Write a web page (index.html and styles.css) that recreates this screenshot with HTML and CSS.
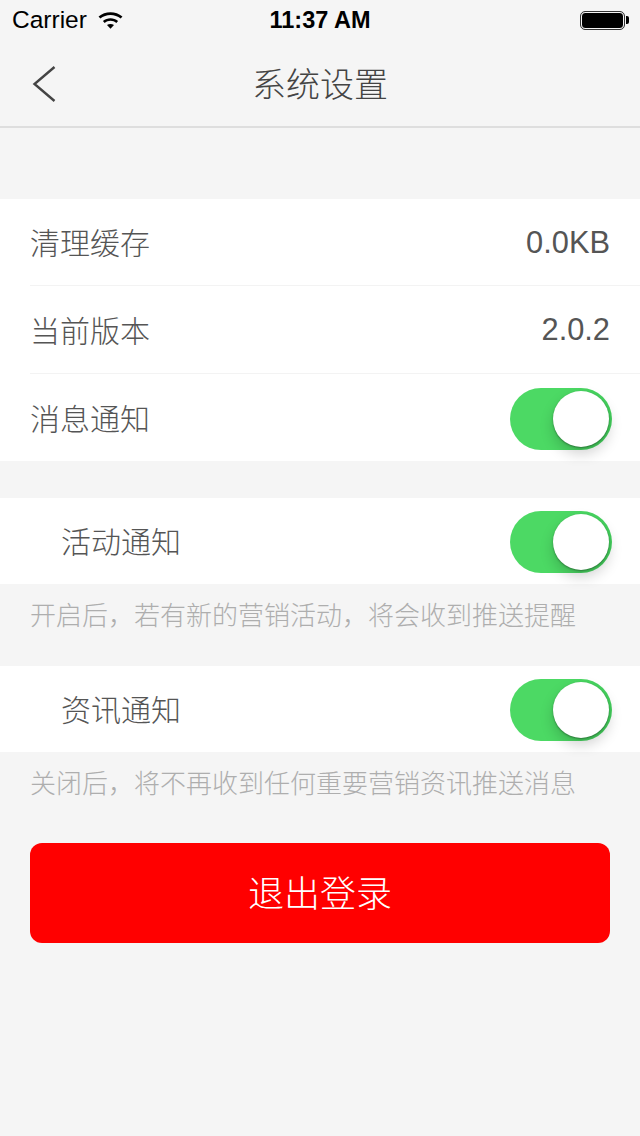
FILE: index.html
```html
<!DOCTYPE html>
<html lang="zh-CN">
<head>
  <meta charset="UTF-8" />
  <title>系统设置</title>
  <link rel="stylesheet" href="styles.css">
</head>
<body>
  <!-- status bar -->
  <div class="status-bar">
    <div class="status-left">
      <span>Carrier</span>
      <svg class="wifi" width="27" height="19" viewBox="0 0 26 18">
        <path d="M1.5 6.2C7.8.6 18.2.6 24.5 6.2l-1.7 1.9C17.4 3.4 8.6 3.4 3.2 8.1z" fill="#000"/>
        <path d="M5.7 10.4c4.3-3.6 10.3-3.6 14.6 0l-1.7 1.9c-3.3-2.7-7.9-2.7-11.2 0z" fill="#000"/>
        <path d="M9.6 14.2c2-1.3 4.8-1.3 6.8 0L13 17.8z" fill="#000"/>
      </svg>
    </div>
    <div class="status-time">11:37 AM</div>
    <div class="battery">
      <div class="battery-body"></div>
      <div class="battery-tip"></div>
    </div>
  </div>

  <!-- nav -->
  <div class="nav-bar">
    <svg class="back" width="28" height="38" viewBox="0 0 28 38">
      <path d="M24.5 2L4.5 19l20 17" fill="none" stroke="#444" stroke-width="2.4"/>
    </svg>
    <h1 class="nav-title">系统设置</h1>
  </div>

  <div class="group first-group">
    <div class="row row-line row-top">
      <span class="label">清理缓存</span>
      <span class="value">0.0KB</span>
    </div>
    <div class="row row-line">
      <span class="label">当前版本</span>
      <span class="value">2.0.2</span>
    </div>
    <div class="row switch-row">
      <span class="label">消息通知</span>
      <div class="switch"><div class="knob"></div></div>
    </div>
  </div>

  <div class="group sub-group">
    <div class="row switch-row sub-row">
      <span class="label">活动通知</span>
      <div class="switch"><div class="knob"></div></div>
    </div>
  </div>
  <p class="note">开启后，若有新的营销活动，将会收到推送提醒</p>

  <div class="group">
    <div class="row switch-row sub-row">
      <span class="label">资讯通知</span>
      <div class="switch"><div class="knob"></div></div>
    </div>
  </div>
  <p class="note note-last">关闭后，将不再收到任何重要营销资讯推送消息</p>

  <button class="logout">退出登录</button>
</body>
</html>
```

FILE: styles.css
```css
html, body {
  margin: 0;
  padding: 0;
  background: #f5f5f5;
  overflow: hidden;
  font-family: "Liberation Sans", "Noto Sans CJK SC", sans-serif;
  box-sizing: border-box;
}
*, *::before, *::after {
  box-sizing: inherit;
}

/* status bar */
.status-bar {
  height: 40px;
  padding: 0 12px;
  display: grid;
  grid-template-columns: 1fr auto 1fr;
  align-items: center;
  color: #000;
}
.status-left {
  display: flex;
  align-items: center;
  gap: 10px;
  font-size: 24.5px;
}
.wifi {
  margin-top: -2px;
}
.status-time {
  font-size: 23.5px;
  font-weight: 700;
}
.battery {
  justify-self: end;
  display: flex;
  align-items: center;
  margin-right: -1px;
}
.battery-body {
  width: 43px;
  height: 17px;
  background: #000;
  border: 1px solid #f5f5f5;
  outline: 1px solid #333;
  outline-offset: 0;
  border-radius: 4px;
}
.battery-tip {
  width: 3px;
  height: 8px;
  margin-left: 2px;
  background: #000;
  border-radius: 0 2px 2px 0;
}

/* nav */
.nav-bar {
  height: 88px;
  padding: 0 30px;
  display: flex;
  align-items: center;
  justify-content: center;
  position: relative;
  border-bottom: 2px solid #dedede;
}
.back {
  position: absolute;
  left: 30px;
  top: 25px;
}
.nav-title {
  margin: 0;
  margin-top: -2px;
  font-size: 34px;
  font-weight: 300;
  color: #444;
}

/* groups */
.group {
  background: #fff;
}
.first-group {
  margin-top: 71px;
}
.sub-group {
  margin-top: 37px;
}
.row {
  height: 87px;
  margin-left: 30px;
  padding-right: 30px;
  display: flex;
  align-items: center;
  justify-content: space-between;
}
.row-line {
  height: 88px;
  border-bottom: 1px solid #f3f3f3;
}
.row-top {
  height: 87px;
}
.switch-row {
  padding-top: 2px;
  padding-right: 28px;
}
.sub-row {
  height: 86px;
  margin-left: 0;
  padding-left: 61px;
}
.label {
  margin-bottom: 2px;
  font-size: 30px;
  font-weight: 300;
  color: #555;
}
.switch-row .label {
  margin-bottom: 4px;
}
.value {
  margin-top: 1px;
  font-size: 30.8px;
  color: #555;
}

/* switch */
.switch {
  width: 102px;
  height: 62px;
  padding: 3px;
  display: flex;
  justify-content: flex-end;
  background: linear-gradient(90deg, #4cd964 60%, #43cf5c);
  border-radius: 31px;
}
.knob {
  width: 56px;
  height: 56px;
  background: #fff;
  border-radius: 50%;
  box-shadow: 0 7px 14px rgba(0,0,0,0.18), 0 1px 2px rgba(0,0,0,0.35);
}

/* notes */
.note {
  margin: 0;
  height: 82px;
  padding: 16px 0 0 30px;
  font-size: 26px;
  font-weight: 300;
  line-height: 32px;
  color: #aeaeae;
}
.note-last {
  height: 91px;
}

.logout {
  display: block;
  width: 580px;
  height: 100px;
  margin: 0 30px;
  padding: 0 0 4px;
  border: none;
  border-radius: 12px;
  background: #f00;
  color: #fff;
  font-family: inherit;
  font-size: 36px;
  font-weight: 300;
}
```
